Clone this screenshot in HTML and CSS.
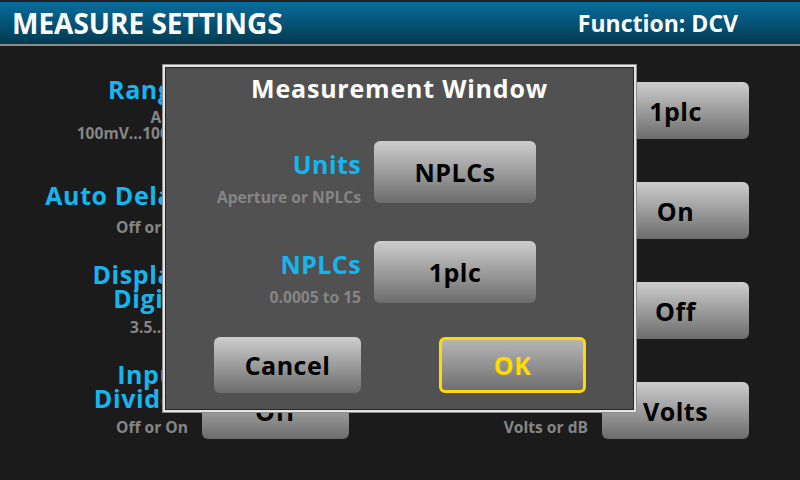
FILE: index.html
```html
<!DOCTYPE html>
<html>
<head>
<meta charset="utf-8">
<link rel="stylesheet" href="styles.css">
</head>
<body>
<div class="screen">
  <header class="topbar">
    <div class="title">MEASURE SETTINGS</div>
    <div class="func">Function: DCV</div>
  </header>
  <main class="settings">
    <div class="col">
      <div class="row">
        <div class="lbl lbl-range"><div class="name">Range</div><div class="sub">Auto<br>100mV...1000V</div></div>
        <div class="btn">100V</div>
      </div>
      <div class="row">
        <div class="lbl lbl-gap"><div class="name">Auto Delay</div><div class="sub">Off or On</div></div>
        <div class="btn">On</div>
      </div>
      <div class="row">
        <div class="lbl"><div class="name">Display<br>Digits</div><div class="sub">3.5...6.5</div></div>
        <div class="btn">5.5</div>
      </div>
      <div class="row">
        <div class="lbl"><div class="name">Input<br>Divider</div><div class="sub">Off or On</div></div>
        <div class="btn">Off</div>
      </div>
    </div>
    <div class="col">
      <div class="row">
        <div class="lbl lbl-range"><div class="name">Integration</div><div class="sub">Measurement<br>Window</div></div>
        <div class="btn">1plc</div>
      </div>
      <div class="row">
        <div class="lbl lbl-gap"><div class="name">Auto Zero</div><div class="sub">Off or On</div></div>
        <div class="btn">On</div>
      </div>
      <div class="row">
        <div class="lbl"><div class="name">Line<br>Sync</div><div class="sub">Off or On</div></div>
        <div class="btn">Off</div>
      </div>
      <div class="row">
        <div class="lbl"><div class="name">Units</div><div class="sub">Volts or dB</div></div>
        <div class="btn">Volts</div>
      </div>
    </div>
  </main>

  <div class="dialog">
    <div class="dlg-title">Measurement Window</div>
    <div class="dlg-row">
      <div class="dlg-lbl"><div class="name">Units</div><div class="dsub">Aperture or NPLCs</div></div>
      <div class="btn dlg-btn">NPLCs</div>
    </div>
    <div class="dlg-row">
      <div class="dlg-lbl"><div class="name">NPLCs</div><div class="dsub">0.0005 to 15</div></div>
      <div class="btn dlg-btn">1plc</div>
    </div>
    <div class="dlg-foot">
      <div class="btn foot-btn">Cancel</div>
      <div class="btn foot-btn ok">OK</div>
    </div>
  </div>
</div>
</body>
</html>
```

FILE: styles.css
```css
* { box-sizing: border-box; }
html, body { margin: 0; padding: 0; }
body {
  width: 800px;
  height: 480px;
  overflow: hidden;
  background: #1b1b1b;
  font-family: "Open Sans", "DejaVu Sans", sans-serif;
  font-weight: 700;
}
.screen {
  position: relative;
  width: 800px;
  height: 480px;
}
.topbar {
  height: 46px;
  border-top: 2px solid #1c2226;
  border-bottom: 2px solid #8b8b8b;
  background: linear-gradient(#076d9d, #03394f);
  display: flex;
  align-items: center;
  justify-content: space-between;
  padding: 0 62px 0 12px;
  color: #fff;
}
.title { font-size: 28px; line-height: 30px; }
.func { font-size: 23px; line-height: 30px; }

.settings {
  display: grid;
  grid-template-columns: 400px 400px;
  padding-top: 36px;
}
.col { display: flex; flex-direction: column; gap: 43px; }
.row {
  display: grid;
  grid-template-columns: 188px 147px;
  grid-template-rows: 57px;
  column-gap: 14px;
}
.lbl {
  text-align: right;
  align-self: end;
  margin-bottom: 4px;
  white-space: nowrap;
}
.lbl-range { margin-bottom: -2px; }
.name {
  color: #16b5ef;
  font-size: 25px;
  line-height: 24px;
  letter-spacing: 0.6px;
}
.sub {
  color: #868686;
  font-size: 15.6px;
  line-height: 16px;
  margin-top: 9px;
}
.lbl-gap .sub { margin-top: 12px; }
.lbl-range .sub { margin-top: 8px; }

.btn {
  background: linear-gradient(#cdcdcd, #6c6c6c);
  border-radius: 6px;
  color: #000;
  font-size: 25px;
  letter-spacing: 0.5px;
  display: flex;
  align-items: center;
  justify-content: center;
  height: 57px;
}

.dialog {
  position: absolute;
  left: 162px;
  top: 64px;
  width: 475px;
  height: 349px;
  background: #515151;
  box-shadow: inset 0 0 0 1px #8f8f8f, inset 0 0 0 3px #e4e4e4, inset 0 0 0 4px #262626;
  padding-top: 9px;
}
.dlg-title {
  color: #fff;
  text-align: center;
  font-size: 25px;
  line-height: 30px;
  letter-spacing: 0.8px;
}
.dlg-row {
  display: grid;
  grid-template-columns: 199px 162px;
  grid-template-rows: 62px;
  column-gap: 13px;
  margin-top: 38px;
}
.dlg-lbl {
  text-align: right;
  align-self: end;
  margin-bottom: -2px;
  white-space: nowrap;
}
.dlg-lbl .name { letter-spacing: 0.4px; }
.dsub {
  color: #858585;
  font-size: 15.6px;
  line-height: 16px;
  margin-top: 13px;
}
.dlg-btn { height: 62px; }
.dlg-foot {
  display: flex;
  gap: 78px;
  padding-left: 52px;
  margin-top: 34px;
}
.foot-btn { width: 147px; height: 56px; }
.ok {
  color: #ffdc00;
  border: 3px solid #ffdc00;
  background: linear-gradient(#b5b5b5, #6f6f6f);
}
```
